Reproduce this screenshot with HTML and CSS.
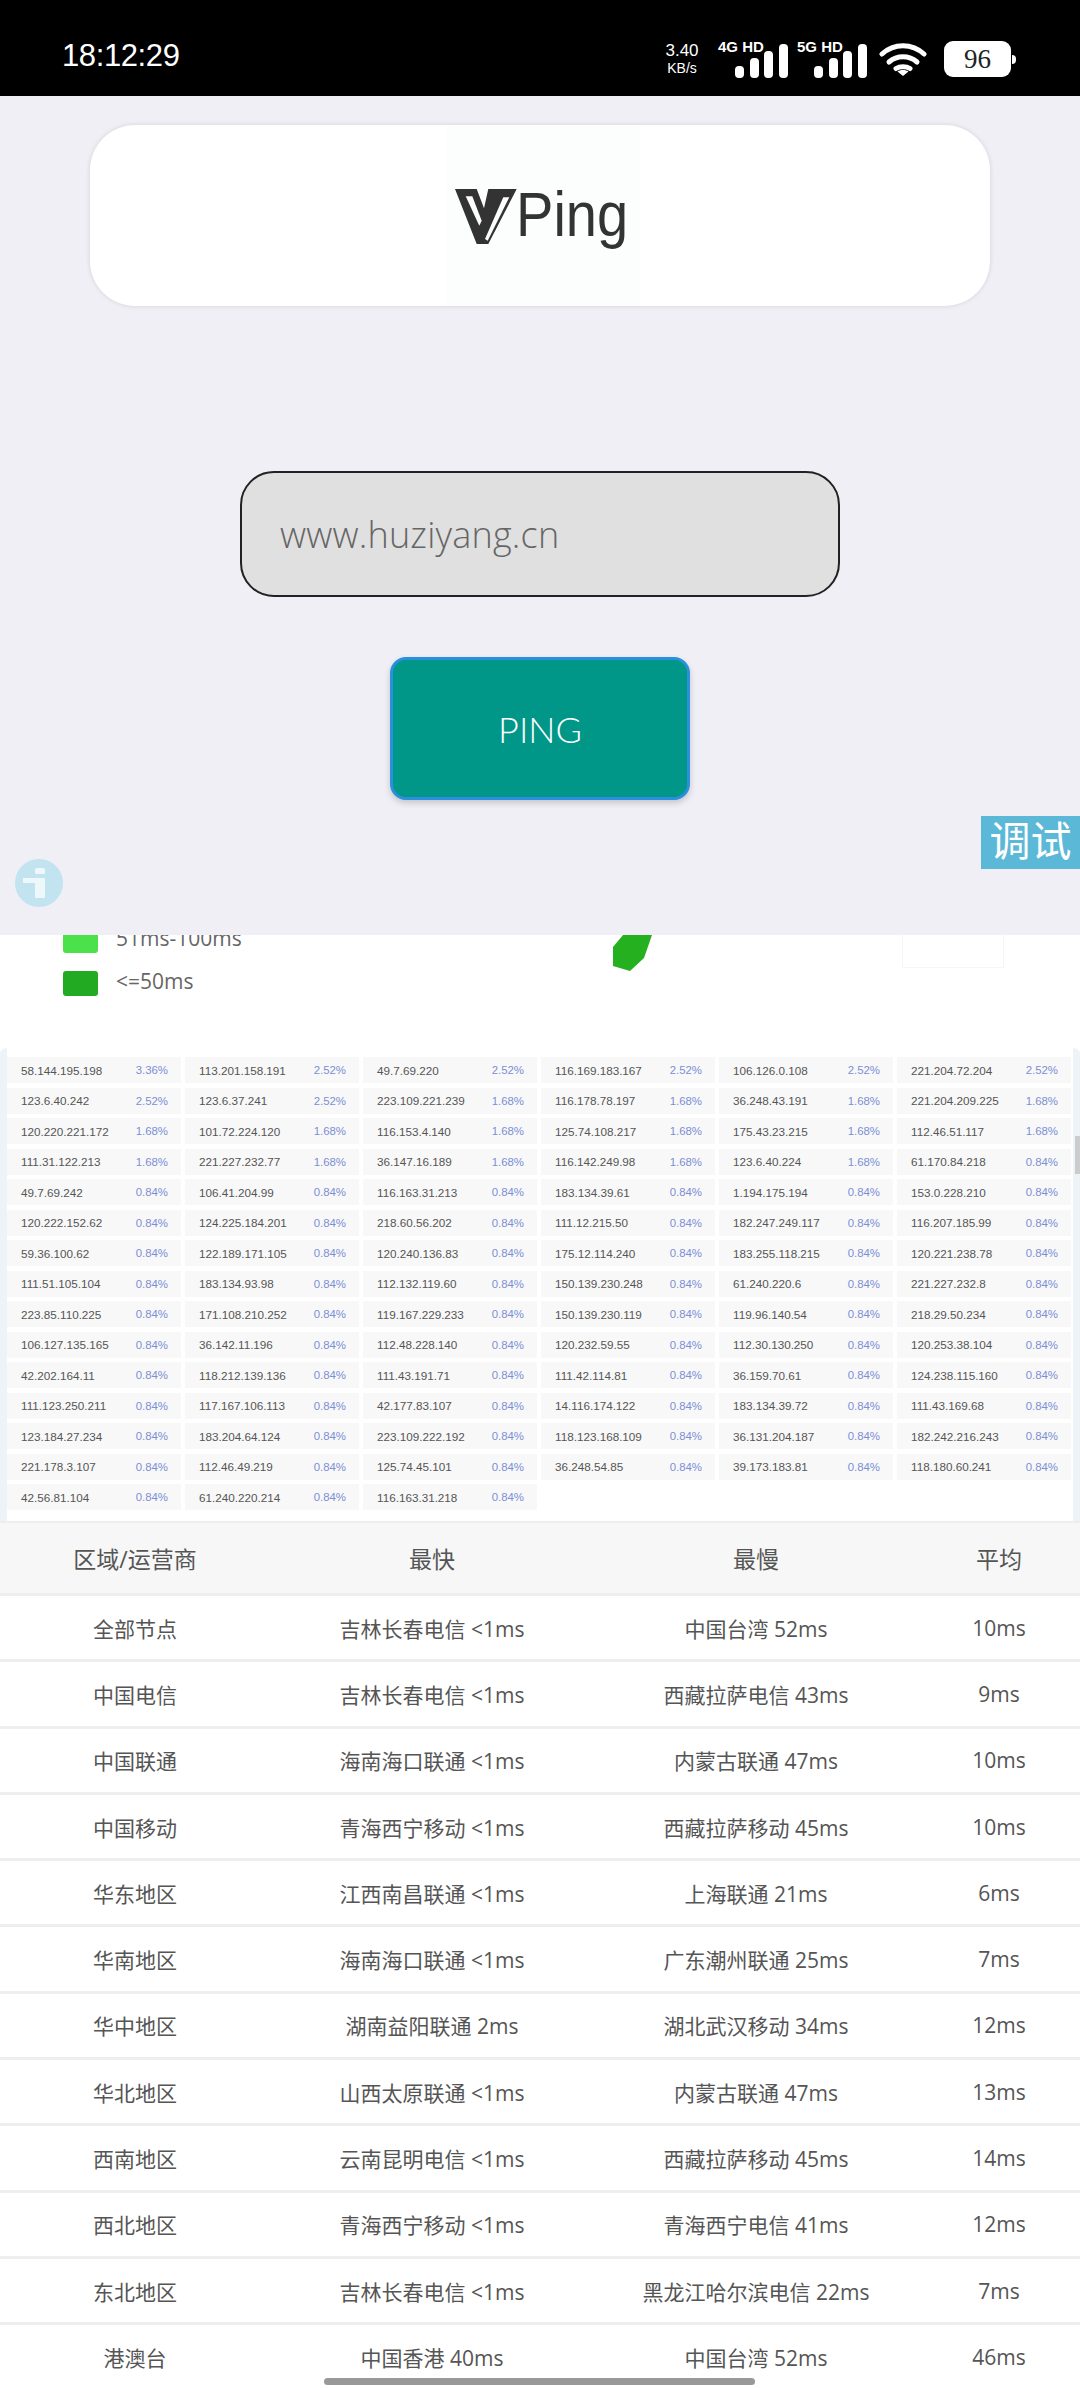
FILE: index.html
```html
<!DOCTYPE html>
<html lang="zh-CN">
<head>
  <meta charset="UTF-8" />
  <title>VPing</title>
  <link rel="stylesheet" href="styles.css">
</head>
<body>
  <!-- Status bar -->
  <div class="statusbar">
    <div class="clock">18:12:29</div>
    <div class="status-icons">
      <div class="speed"><span class="speed-num">3.40</span><span class="speed-unit">KB/s</span></div>
      <div class="signal">
        <span class="signal-label">4G HD</span>
        <svg width="53" height="34" viewBox="0 0 53 34" fill="#fff"><rect x="0" y="22" width="9" height="12" rx="4"/><rect x="15" y="14" width="9" height="20" rx="4"/><rect x="29" y="7" width="9" height="27" rx="4"/><rect x="44" y="0" width="9" height="34" rx="4"/></svg>
      </div>
      <div class="signal">
        <span class="signal-label">5G HD</span>
        <svg width="53" height="34" viewBox="0 0 53 34" fill="#fff"><rect x="0" y="22" width="9" height="12" rx="4"/><rect x="15" y="14" width="9" height="20" rx="4"/><rect x="29" y="7" width="9" height="27" rx="4"/><rect x="44" y="0" width="9" height="34" rx="4"/></svg>
      </div>
      <svg class="wifi" width="48" height="35" viewBox="0 0 48 35" fill="none" stroke="#fff" stroke-width="5" stroke-linecap="round"><path d="M3 13C15 2 33 2 45 13"/><path d="M10 21C18 14 30 14 38 21"/><path d="M17 27.500C21 25 27 25 31 27.500"/><path d="M24 35L18.500 30.500C21 28.500 27 28.500 29.500 30.500Z" fill="#fff" stroke="none"/></svg>
      <div class="battery"><div class="battery-body">96</div><div class="battery-nub"></div></div>
    </div>
  </div>

  <!-- Ping form -->
  <div class="panel">
    <div class="logo-card">
      <div class="logo">
        <svg width="62" height="55" viewBox="0 0 62 55"><path d="M0 0H21.700L29 19.300L33.300 0H61.700L33.300 55H21.700Z" fill="#333"/><path d="M10.700 7.300H17.300L26.700 31.700L24.300 36.700Z" fill="#fcfefe"/><path d="M48.300 8.300H54.300L32.700 51.700L30 50Z" fill="#fcfefe"/></svg>
        <span class="logo-text">Ping</span>
      </div>
    </div>
    <input class="host-input" type="text" value="www.huziyang.cn">
    <button class="ping-btn">PING</button>
    <div class="debug-tab">调试</div>
    <svg class="info-icon" width="48" height="48" viewBox="0 0 48 48"><circle cx="24" cy="24" r="24" fill="#c2e3f0"/><rect x="20" y="9" width="10" height="6" rx="1.500" fill="#eef7fa"/><path d="M8 19H30V39H20V24H8Z" fill="#eef7fa"/></svg>
  </div>

  <!-- Map legend (cut by the panel) -->
  <div class="chart">
    <div class="legend-row"><span class="swatch swatch-light"></span><span class="legend-label">51ms-100ms</span></div>
    <div class="legend-row"><span class="swatch swatch-dark"></span><span class="legend-label">&lt;=50ms</span></div>
    <svg class="map-piece" width="39" height="36" viewBox="0 0 39 36"><path d="M10 0H39L31 23L17 36L0 31V12Z" fill="#25b01f"/></svg>
    <div class="map-box"></div>
  </div>

  <!-- IP list -->
  <div class="ip-wrap">
    <div class="ip-list">
      <div class="ip"><span>58.144.195.198</span><b>3.36%</b></div>
      <div class="ip"><span>113.201.158.191</span><b>2.52%</b></div>
      <div class="ip"><span>49.7.69.220</span><b>2.52%</b></div>
      <div class="ip"><span>116.169.183.167</span><b>2.52%</b></div>
      <div class="ip"><span>106.126.0.108</span><b>2.52%</b></div>
      <div class="ip"><span>221.204.72.204</span><b>2.52%</b></div>
      <div class="ip"><span>123.6.40.242</span><b>2.52%</b></div>
      <div class="ip"><span>123.6.37.241</span><b>2.52%</b></div>
      <div class="ip"><span>223.109.221.239</span><b>1.68%</b></div>
      <div class="ip"><span>116.178.78.197</span><b>1.68%</b></div>
      <div class="ip"><span>36.248.43.191</span><b>1.68%</b></div>
      <div class="ip"><span>221.204.209.225</span><b>1.68%</b></div>
      <div class="ip"><span>120.220.221.172</span><b>1.68%</b></div>
      <div class="ip"><span>101.72.224.120</span><b>1.68%</b></div>
      <div class="ip"><span>116.153.4.140</span><b>1.68%</b></div>
      <div class="ip"><span>125.74.108.217</span><b>1.68%</b></div>
      <div class="ip"><span>175.43.23.215</span><b>1.68%</b></div>
      <div class="ip"><span>112.46.51.117</span><b>1.68%</b></div>
      <div class="ip"><span>111.31.122.213</span><b>1.68%</b></div>
      <div class="ip"><span>221.227.232.77</span><b>1.68%</b></div>
      <div class="ip"><span>36.147.16.189</span><b>1.68%</b></div>
      <div class="ip"><span>116.142.249.98</span><b>1.68%</b></div>
      <div class="ip"><span>123.6.40.224</span><b>1.68%</b></div>
      <div class="ip"><span>61.170.84.218</span><b>0.84%</b></div>
      <div class="ip"><span>49.7.69.242</span><b>0.84%</b></div>
      <div class="ip"><span>106.41.204.99</span><b>0.84%</b></div>
      <div class="ip"><span>116.163.31.213</span><b>0.84%</b></div>
      <div class="ip"><span>183.134.39.61</span><b>0.84%</b></div>
      <div class="ip"><span>1.194.175.194</span><b>0.84%</b></div>
      <div class="ip"><span>153.0.228.210</span><b>0.84%</b></div>
      <div class="ip"><span>120.222.152.62</span><b>0.84%</b></div>
      <div class="ip"><span>124.225.184.201</span><b>0.84%</b></div>
      <div class="ip"><span>218.60.56.202</span><b>0.84%</b></div>
      <div class="ip"><span>111.12.215.50</span><b>0.84%</b></div>
      <div class="ip"><span>182.247.249.117</span><b>0.84%</b></div>
      <div class="ip"><span>116.207.185.99</span><b>0.84%</b></div>
      <div class="ip"><span>59.36.100.62</span><b>0.84%</b></div>
      <div class="ip"><span>122.189.171.105</span><b>0.84%</b></div>
      <div class="ip"><span>120.240.136.83</span><b>0.84%</b></div>
      <div class="ip"><span>175.12.114.240</span><b>0.84%</b></div>
      <div class="ip"><span>183.255.118.215</span><b>0.84%</b></div>
      <div class="ip"><span>120.221.238.78</span><b>0.84%</b></div>
      <div class="ip"><span>111.51.105.104</span><b>0.84%</b></div>
      <div class="ip"><span>183.134.93.98</span><b>0.84%</b></div>
      <div class="ip"><span>112.132.119.60</span><b>0.84%</b></div>
      <div class="ip"><span>150.139.230.248</span><b>0.84%</b></div>
      <div class="ip"><span>61.240.220.6</span><b>0.84%</b></div>
      <div class="ip"><span>221.227.232.8</span><b>0.84%</b></div>
      <div class="ip"><span>223.85.110.225</span><b>0.84%</b></div>
      <div class="ip"><span>171.108.210.252</span><b>0.84%</b></div>
      <div class="ip"><span>119.167.229.233</span><b>0.84%</b></div>
      <div class="ip"><span>150.139.230.119</span><b>0.84%</b></div>
      <div class="ip"><span>119.96.140.54</span><b>0.84%</b></div>
      <div class="ip"><span>218.29.50.234</span><b>0.84%</b></div>
      <div class="ip"><span>106.127.135.165</span><b>0.84%</b></div>
      <div class="ip"><span>36.142.11.196</span><b>0.84%</b></div>
      <div class="ip"><span>112.48.228.140</span><b>0.84%</b></div>
      <div class="ip"><span>120.232.59.55</span><b>0.84%</b></div>
      <div class="ip"><span>112.30.130.250</span><b>0.84%</b></div>
      <div class="ip"><span>120.253.38.104</span><b>0.84%</b></div>
      <div class="ip"><span>42.202.164.11</span><b>0.84%</b></div>
      <div class="ip"><span>118.212.139.136</span><b>0.84%</b></div>
      <div class="ip"><span>111.43.191.71</span><b>0.84%</b></div>
      <div class="ip"><span>111.42.114.81</span><b>0.84%</b></div>
      <div class="ip"><span>36.159.70.61</span><b>0.84%</b></div>
      <div class="ip"><span>124.238.115.160</span><b>0.84%</b></div>
      <div class="ip"><span>111.123.250.211</span><b>0.84%</b></div>
      <div class="ip"><span>117.167.106.113</span><b>0.84%</b></div>
      <div class="ip"><span>42.177.83.107</span><b>0.84%</b></div>
      <div class="ip"><span>14.116.174.122</span><b>0.84%</b></div>
      <div class="ip"><span>183.134.39.72</span><b>0.84%</b></div>
      <div class="ip"><span>111.43.169.68</span><b>0.84%</b></div>
      <div class="ip"><span>123.184.27.234</span><b>0.84%</b></div>
      <div class="ip"><span>183.204.64.124</span><b>0.84%</b></div>
      <div class="ip"><span>223.109.222.192</span><b>0.84%</b></div>
      <div class="ip"><span>118.123.168.109</span><b>0.84%</b></div>
      <div class="ip"><span>36.131.204.187</span><b>0.84%</b></div>
      <div class="ip"><span>182.242.216.243</span><b>0.84%</b></div>
      <div class="ip"><span>221.178.3.107</span><b>0.84%</b></div>
      <div class="ip"><span>112.46.49.219</span><b>0.84%</b></div>
      <div class="ip"><span>125.74.45.101</span><b>0.84%</b></div>
      <div class="ip"><span>36.248.54.85</span><b>0.84%</b></div>
      <div class="ip"><span>39.173.183.81</span><b>0.84%</b></div>
      <div class="ip"><span>118.180.60.241</span><b>0.84%</b></div>
      <div class="ip"><span>42.56.81.104</span><b>0.84%</b></div>
      <div class="ip"><span>61.240.220.214</span><b>0.84%</b></div>
      <div class="ip"><span>116.163.31.218</span><b>0.84%</b></div>
    </div>
    <div class="scroll-thumb"></div>
  </div>

  <!-- Region table -->
  <div class="region-table">
    <div class="row row-head"><div>区域/运营商</div><div>最快</div><div>最慢</div><div>平均</div></div>
    <div class="row"><div>全部节点</div><div>吉林长春电信 &lt;1ms</div><div>中国台湾 52ms</div><div>10ms</div></div>
    <div class="row"><div>中国电信</div><div>吉林长春电信 &lt;1ms</div><div>西藏拉萨电信 43ms</div><div>9ms</div></div>
    <div class="row"><div>中国联通</div><div>海南海口联通 &lt;1ms</div><div>内蒙古联通 47ms</div><div>10ms</div></div>
    <div class="row"><div>中国移动</div><div>青海西宁移动 &lt;1ms</div><div>西藏拉萨移动 45ms</div><div>10ms</div></div>
    <div class="row"><div>华东地区</div><div>江西南昌联通 &lt;1ms</div><div>上海联通 21ms</div><div>6ms</div></div>
    <div class="row"><div>华南地区</div><div>海南海口联通 &lt;1ms</div><div>广东潮州联通 25ms</div><div>7ms</div></div>
    <div class="row"><div>华中地区</div><div>湖南益阳联通 2ms</div><div>湖北武汉移动 34ms</div><div>12ms</div></div>
    <div class="row"><div>华北地区</div><div>山西太原联通 &lt;1ms</div><div>内蒙古联通 47ms</div><div>13ms</div></div>
    <div class="row"><div>西南地区</div><div>云南昆明电信 &lt;1ms</div><div>西藏拉萨移动 45ms</div><div>14ms</div></div>
    <div class="row"><div>西北地区</div><div>青海西宁移动 &lt;1ms</div><div>青海西宁电信 41ms</div><div>12ms</div></div>
    <div class="row"><div>东北地区</div><div>吉林长春电信 &lt;1ms</div><div>黑龙江哈尔滨电信 22ms</div><div>7ms</div></div>
    <div class="row"><div>港澳台</div><div>中国香港 40ms</div><div>中国台湾 52ms</div><div>46ms</div></div>
  </div>

  <div class="home-bar"></div>
</body>
</html>
```

FILE: styles.css
```css
html, body {
  margin: 0;
  padding: 0;
}
body {
  position: relative;
  width: 1080px;
  height: 2388px;
  overflow: hidden;
  background-color: #fff;
  font-family: "Liberation Sans", "Noto Sans CJK SC", sans-serif;
}

/* Status bar */
.statusbar {
  height: 96px;
  background-color: #000;
  color: #fff;
  display: flex;
  justify-content: space-between;
  box-sizing: border-box;
  padding: 41px 64px 0 62px;
}
.clock {
  font-size: 31px;
  line-height: 30px;
  letter-spacing: -0.4px;
}
.status-icons {
  display: flex;
  align-items: flex-start;
}
.speed {
  display: flex;
  flex-direction: column;
  align-items: center;
  width: 36px;
  margin-top: 1px;
}
.speed-num {
  font-size: 17px;
  line-height: 17px;
}
.speed-unit {
  font-size: 14px;
  line-height: 18px;
}
.signal {
  position: relative;
  width: 53px;
  height: 37px;
  margin-left: 35px;
  padding-top: 3px;
}
.signal + .signal {
  margin-left: 26px;
}
.signal svg {
  display: block;
}
.signal-label {
  position: absolute;
  left: -17px;
  top: -2px;
  font-size: 15px;
  line-height: 15px;
  font-weight: bold;
  white-space: nowrap;
}
.wifi {
  margin-left: 12px;
}
.battery {
  display: flex;
  align-items: center;
  margin-left: 17px;
}
.battery-body {
  width: 67px;
  height: 36px;
  border-radius: 9px;
  background-color: #fff;
  color: #222;
  font-size: 27px;
  line-height: 36px;
  text-align: center;
  font-family: "Liberation Serif", serif;
}
.battery-nub {
  width: 4px;
  height: 9px;
  margin-left: 1px;
  border-radius: 0 4px 4px 0;
  background-color: #fff;
}

/* Ping form */
.panel {
  position: relative;
  height: 839px;
  background-color: #efeff5;
  display: flex;
  flex-direction: column;
  align-items: center;
}
.logo-card {
  width: 900px;
  height: 181px;
  margin-top: 29px;
  border-radius: 45px;
  background-color: #fff;
  box-shadow: 0 0 5px rgba(0,0,0,0.12);
  display: flex;
  justify-content: center;
}
.logo {
  width: 193px;
  height: 181px;
  box-sizing: border-box;
  margin-left: 7px;
  padding-left: 8px;
  background-color: #fcfefe;
  display: flex;
  align-items: center;
  color: #333;
}
.logo svg {
  flex: none;
  margin-top: 2px;
}
.logo-text {
  display: block;
  font-size: 63px;
  line-height: 70px;
  transform: scaleX(0.89);
  transform-origin: left center;
  margin-left: -1px;
  margin-top: -4px;
}
.host-input {
  width: 600px;
  height: 126px;
  box-sizing: border-box;
  margin-top: 165px;
  padding: 0 0 0 38px;
  border: 2px solid #222;
  border-radius: 34px;
  background-color: #e0e0e0;
  color: #666;
  font-family: "Open Sans", sans-serif;
  font-weight: 300;
  font-size: 36px;
  letter-spacing: 0.2px;
}
.ping-btn {
  width: 300px;
  height: 143px;
  margin-top: 60px;
  border: 3px solid #2a8fdc;
  border-radius: 16px;
  background-color: #009688;
  box-shadow: 0 3px 6px rgba(0,0,0,0.18);
  color: #fff;
  font-family: "Lato", sans-serif;
  font-weight: 300;
  font-size: 36px;
}
.debug-tab {
  position: absolute;
  right: 0;
  top: 720px;
  width: 99px;
  height: 53px;
  background-color: #5bb8d6;
  color: #fff;
  font-size: 41px;
  line-height: 53px;
  text-align: center;
}
.info-icon {
  position: absolute;
  left: 15px;
  top: 763px;
}

/* Legend */
.chart {
  position: relative;
  height: 113px;
  overflow: hidden;
  box-sizing: border-box;
  padding: 0 0 0 63px;
  color: #666;
  font-family: "Open Sans", "Noto Sans CJK SC", sans-serif;
}
.legend-row {
  display: flex;
  align-items: center;
  height: 43px;
  font-size: 21px;
  margin-top: -16px;
}
.legend-row + .legend-row {
  margin-top: 0;
}
.legend-label {
  margin-top: -5px;
}
.swatch {
  width: 35px;
  height: 25px;
  margin-right: 18px;
  border-radius: 3px;
}
.swatch-light {
  background-color: #4be14b;
}
.swatch-dark {
  background-color: #22ab22;
}
.map-piece {
  position: absolute;
  left: 613px;
  top: 0;
}
.map-box {
  position: absolute;
  left: 902px;
  top: -2px;
  width: 100px;
  height: 33px;
  border: 1px solid #f6f6f6;
}

/* IP list */
.ip-wrap {
  position: relative;
  height: 473px;
  box-sizing: border-box;
  padding: 0 7px;
  background-color: #eef3f8;
  border-radius: 6px 6px 0 0;
}
.ip-list {
  height: 473px;
  box-sizing: border-box;
  background-color: #fff;
  padding-top: 9px;
  display: grid;
  grid-template-columns: repeat(6, 174px);
  column-gap: 4px;
  grid-auto-rows: 26px;
  row-gap: 4.5px;
}
.ip {
  display: flex;
  justify-content: space-between;
  align-items: center;
  padding: 0 13px 0 14px;
  background-color: #f8f8f8;
  font-size: 11.7px;
  color: #555;
}
.ip b {
  font-weight: normal;
  font-size: 11.4px;
  color: #7b8fd6;
}
.scroll-thumb {
  position: absolute;
  right: 0;
  top: 88px;
  width: 5px;
  height: 38px;
  background-color: #ccc;
}

/* Region table */
.region-table {
  border-top: 2px solid #eee;
  color: #555;
  font-size: 21px;
  font-family: "Open Sans", "Noto Sans CJK SC", sans-serif;
}
.row {
  display: grid;
  grid-template-columns: 25% 30% 30% 15%;
  align-items: center;
  text-align: center;
  height: 66.3px;
  box-sizing: border-box;
  border-bottom: 3px solid #eee;
}
.row-head {
  height: 73px;
  background-color: #f7f7f7;
  font-size: 23px;
}

/* Gesture bar */
.home-bar {
  position: absolute;
  left: 324px;
  top: 2378px;
  width: 431px;
  height: 7px;
  border-radius: 4px;
  background-color: #999;
}
```
